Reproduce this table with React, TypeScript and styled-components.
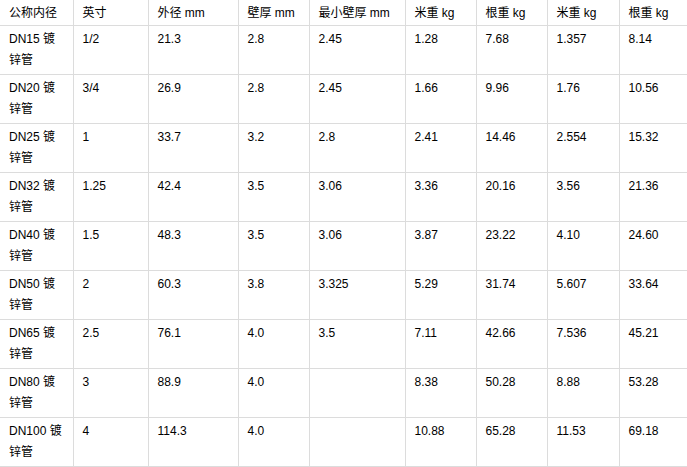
import styled, { createGlobalStyle } from "styled-components";

const GlobalStyle = createGlobalStyle`
  html, body {
    margin: 0;
    padding: 0;
    background: #fff;
  }
  body {
    font-family: "Liberation Sans", Arial, "Noto Sans CJK SC", sans-serif;
    font-size: 12px;
    color: #000;
  }
`;

const columns = [73, 75, 90, 71, 96, 71, 71, 72, 80];

const headers = [
  "公称内径",
  "英寸",
  "外径 mm",
  "壁厚 mm",
  "最小壁厚 mm",
  "米重 kg",
  "根重 kg",
  "米重 kg",
  "根重 kg",
];

const rows: string[][] = [
  ["DN15 镀锌管", "1/2", "21.3", "2.8", "2.45", "1.28", "7.68", "1.357", "8.14"],
  ["DN20 镀锌管", "3/4", "26.9", "2.8", "2.45", "1.66", "9.96", "1.76", "10.56"],
  ["DN25 镀锌管", "1", "33.7", "3.2", "2.8", "2.41", "14.46", "2.554", "15.32"],
  ["DN32 镀锌管", "1.25", "42.4", "3.5", "3.06", "3.36", "20.16", "3.56", "21.36"],
  ["DN40 镀锌管", "1.5", "48.3", "3.5", "3.06", "3.87", "23.22", "4.10", "24.60"],
  ["DN50 镀锌管", "2", "60.3", "3.8", "3.325", "5.29", "31.74", "5.607", "33.64"],
  ["DN65 镀锌管", "2.5", "76.1", "4.0", "3.5", "7.11", "42.66", "7.536", "45.21"],
  ["DN80 镀锌管", "3", "88.9", "4.0", "", "8.38", "50.28", "8.88", "53.28"],
  ["DN100 镀锌管", "4", "114.3", "4.0", "", "10.88", "65.28", "11.53", "69.18"],
];

function App() {
  return (
    <>
      <GlobalStyle />
      <Frame>
        <Table>
          <colgroup>
            {columns.map((w, i) => (
              <col key={i} style={{ width: w }} />
            ))}
          </colgroup>
          <thead>
            <tr>
              {headers.map((h, i) => (
                <HeadCell key={i}>{h}</HeadCell>
              ))}
            </tr>
          </thead>
          <tbody>
            {rows.map((r, i) => (
              <tr key={i}>
                {r.map((c, j) => (
                  <Cell key={j}>{c}</Cell>
                ))}
              </tr>
            ))}
          </tbody>
        </Table>
      </Frame>
    </>
  );
}

export default App;

const Frame = styled.div`
  width: 687px;
  height: 467px;
  overflow: hidden;
`;

const Table = styled.table`
  border-collapse: collapse;
  table-layout: fixed;
  width: 699px;
  font-family: "Liberation Sans", Arial, "Noto Sans CJK SC", sans-serif;
  font-size: 12px;
  color: #000;
`;

const HeadCell = styled.th`
  height: 25px;
  padding: 0 9px;
  border-right: 1px solid #dcdcdc;
  border-bottom: 1px solid #dcdcdc;
  font-weight: normal;
  text-align: left;
  line-height: 20px;
  vertical-align: middle;
  white-space: nowrap;
`;

const Cell = styled.td`
  height: 48px;
  box-sizing: border-box;
  padding: 3px 9px 3px 9px;
  border-right: 1px solid #dcdcdc;
  border-bottom: 1px solid #dcdcdc;
  line-height: 21px;
  vertical-align: top;
  text-align: left;
`;
